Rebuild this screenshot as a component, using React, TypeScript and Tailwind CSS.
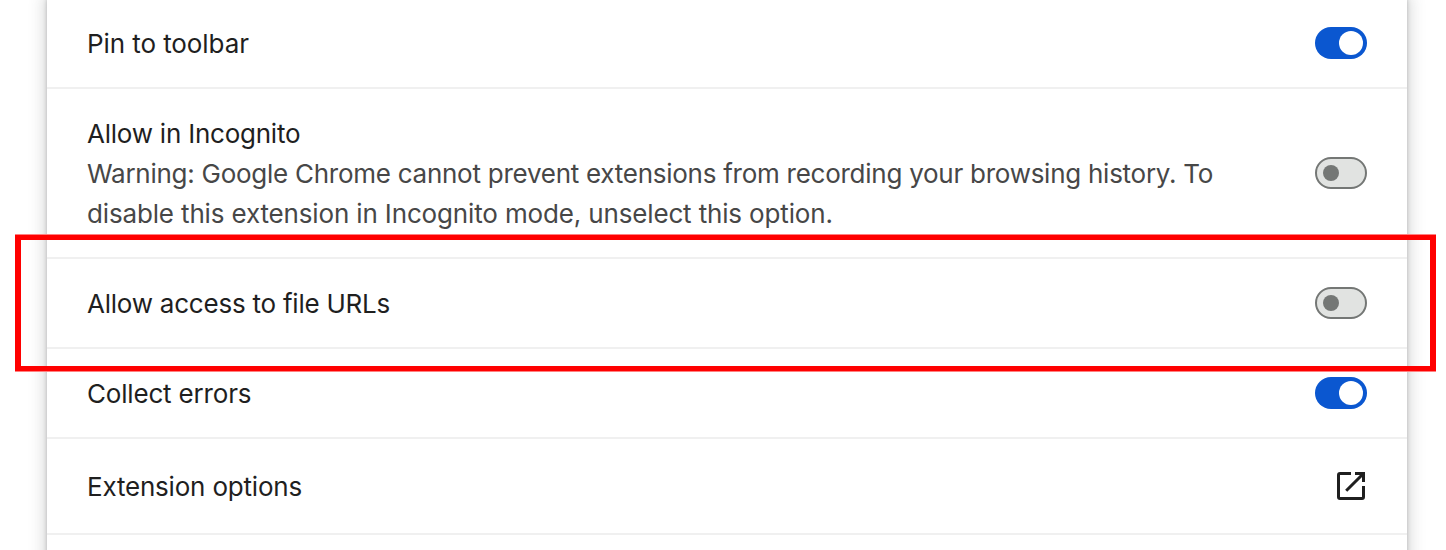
import type { ReactNode } from "react";

function Toggle({ on, label }: { on: boolean; label: string }) {
  return on ? (
    <button role="switch" aria-checked aria-label={label} className="flex h-8 w-[52px] shrink-0 items-center justify-end rounded-full bg-[#0b57d0] pr-1">
      <span className="size-6 rounded-full bg-white" />
    </button>
  ) : (
    <button role="switch" aria-checked={false} aria-label={label} className="flex h-8 w-[52px] shrink-0 items-center rounded-full border-2 border-[#747775] bg-[#e1e3e1] pl-1.5">
      <span className="size-4 rounded-full bg-[#747775]" />
    </button>
  );
}

function Row({ title, className, children }: { title: ReactNode; className: string; children: ReactNode }) {
  return (
    <div className={"flex shrink-0 items-center justify-between border-b-2 border-[#f0f0f0] px-10 " + className}>
      <div className="pt-0.5 whitespace-nowrap">{title}</div>
      {children}
    </div>
  );
}

export default function App() {
  return (
    <main className="relative flow-root h-[550px] overflow-hidden bg-white pr-[39px] pl-[47px] font-['Inter',sans-serif] text-[26px] leading-10 tracking-[-0.23px] text-[#1f1f1f]">
      <section className="-mt-px flex h-[580px] flex-col bg-white shadow-[0_0_4px_0_rgba(60,64,67,0.3),0_0_14px_4px_rgba(60,64,67,0.18)]">
        <Row title="Pin to toolbar" className="h-[90px] tracking-[-0.08px]"><Toggle on label="Pin to toolbar" /></Row>
        <Row
          className="h-[170px]"
          title={
            <>
              <div>Allow in Incognito</div>
              <div className="text-[#474747]">
                <div className="tracking-[-0.26px]">Warning: Google Chrome cannot prevent extensions from recording your browsing history. To</div>
                <div className="tracking-[-0.15px]">disable this extension in Incognito mode, unselect this option.</div>
              </div>
            </>
          }
        ><Toggle on={false} label="Allow in Incognito" /></Row>
        <Row title="Allow access to file URLs" className="h-[90px]"><Toggle on={false} label="Allow access to file URLs" /></Row>
        <Row title="Collect errors" className="h-[90px] tracking-[-0.18px]"><Toggle on label="Collect errors" /></Row>
        <Row title="Extension options" className="h-[96px] tracking-[-0.2px]">
          <svg className="mr-0.5 size-7" viewBox="0 0 28 28" fill="none" stroke="#1f1f1f" strokeWidth="3">
            <path d="M14 1.500H3Q1.500 1.500 1.500 3V25Q1.500 26.500 3 26.500H25Q26.500 26.500 26.500 25V14M18 1.500H26.500V10M26 2L9.200 18.800" />
            <path d="M22 2H26V6Z" fill="#1f1f1f" stroke="none" />
          </svg>
        </Row>
      </section>
      <div className="absolute top-[235px] left-[15px] h-[136px] w-[1421px] border-x-6 border-y-5 border-[#ff0000] shadow-[0_1px_0_#ff8080,0_-1px_0_#ff8080]" />
    </main>
  );
}
